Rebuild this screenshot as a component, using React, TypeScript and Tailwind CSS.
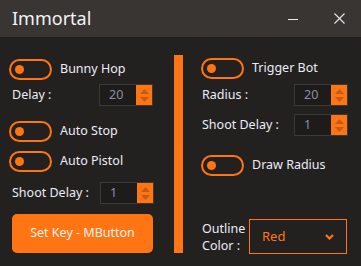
import React from "react";

const font = { fontFamily: '"Segoe UI", "Noto Sans", "Open Sans", sans-serif' };

function Toggle({ label }: { label: string }) {
  return (
    <div className="flex items-center h-[22px]">
      <div className="w-[43px] h-[21px] rounded-full border-2 border-[#ff7514] flex items-center pl-[4px]">
        <div className="w-[9px] h-[9px] rounded-full bg-[#ff7514]" />
      </div>
      <span className="ml-[8px] text-[12.5px] text-[#ececf4]">{label}</span>
    </div>
  );
}

function Spinner({ value }: { value: string }) {
  return (
    <div className="w-[54px] h-[22px] border border-[#3a3938] bg-[#1d1c1b] flex">
      <div className="flex-1 flex items-center pl-[9px] text-[12.5px] text-[#8d8ea6]">{value}</div>
      <div className="w-[16px] h-full bg-[#ff7514] flex flex-col items-center justify-center gap-[3px]">
        <svg width="9" height="5" viewBox="0 0 9 5">
          <path d="M0 5 L4.5 0 L9 5 Z" fill="#c55a16" />
        </svg>
        <svg width="9" height="5" viewBox="0 0 9 5">
          <path d="M0 0 L4.5 5 L9 0 Z" fill="#c55a16" />
        </svg>
      </div>
    </div>
  );
}

function LabeledSpinner({ label, value, width }: { label: string; value: string; width: string }) {
  return (
    <div className="flex items-center h-[22px]">
      <span className={`text-[12.5px] text-[#ececf4] ${width}`}>{label}</span>
      <Spinner value={value} />
    </div>
  );
}

export default function App() {
  return (
    <div className="w-[361px] h-[266px] bg-[#232120] flex flex-col overflow-hidden" style={font}>
      <div className="h-[37px] bg-[#393533] flex items-center pl-[12px] pr-[16px] shrink-0">
        <span className="text-[18px] text-[#f4f4f8] flex-1">Immortal</span>
        <svg width="10" height="10" viewBox="0 0 10 10" className="mr-[36px]">
          <path d="M0 5.5 H10" stroke="#e8e8e8" strokeWidth="1" />
        </svg>
        <svg width="11" height="11" viewBox="0 0 11 11">
          <path d="M0.5 0.5 L10.5 10.5 M10.5 0.5 L0.5 10.5" stroke="#e8e8e8" strokeWidth="1.1" />
        </svg>
      </div>

      <div className="flex flex-1">
        <div className="w-[174px] pl-[9px] pt-[21px] flex flex-col">
          <Toggle label="Bunny Hop" />
          <div className="mt-[4px] pl-[3px]">
            <LabeledSpinner label="Delay :" value="20" width="w-[87px]" />
          </div>
          <div className="mt-[14px]">
            <Toggle label="Auto Stop" />
          </div>
          <div className="mt-[8px]">
            <Toggle label="Auto Pistol" />
          </div>
          <div className="mt-[10px] pl-[3px]">
            <LabeledSpinner label="Shoot Delay :" value="1" width="w-[88px]" />
          </div>
          <button className="mt-[10px] ml-[3px] w-[141px] h-[39px] rounded-[5px] bg-[#ff7514] text-[12.5px] text-[#fbf0ea]">
            Set Key - MButton
          </button>
        </div>

        <div className="w-[9px] mt-[18px] h-[198px] bg-[#ff7514]" />

        <div className="flex-1 pl-[18px] pt-[20px] flex flex-col">
          <Toggle label="Trigger Bot" />
          <div className="mt-[5px] pl-[1px]">
            <LabeledSpinner label="Radius :" value="20" width="w-[92px]" />
          </div>
          <div className="mt-[8px] pl-[1px]">
            <LabeledSpinner label="Shoot Delay :" value="1" width="w-[92px]" />
          </div>
          <div className="mt-[18px]">
            <Toggle label="Draw Radius" />
          </div>
          <div className="mt-[43px] flex items-center pl-[1px]">
            <div className="w-[47px] flex flex-col text-[12.5px] leading-[17px] text-[#ececf4]">
              <span>Outline</span>
              <span>Color :</span>
            </div>
            <div className="w-[98px] h-[35px] border border-[#ff7514] flex items-center pl-[12px] pr-[12px]">
              <span className="flex-1 text-[13px] text-[#ff7514]">Red</span>
              <svg width="9" height="6" viewBox="0 0 9 6">
                <path d="M1 1 L4.5 4.5 L8 1" stroke="#ff7514" strokeWidth="2.2" fill="none" />
              </svg>
            </div>
          </div>
        </div>
      </div>
    </div>
  );
}
